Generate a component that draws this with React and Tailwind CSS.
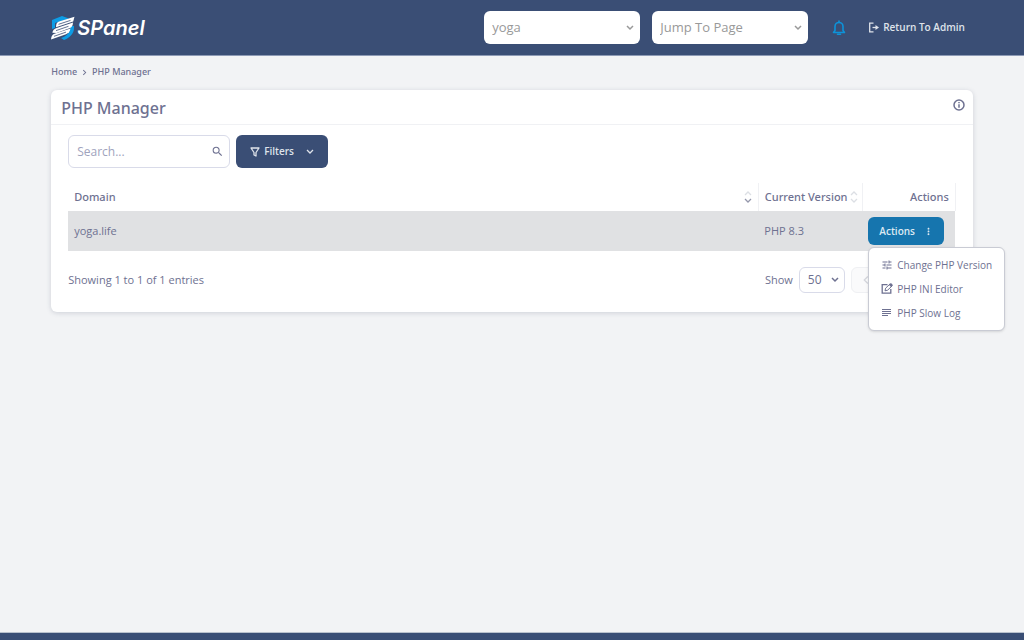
import { useState } from "react";
import {
  MdChevronLeft,
  MdChevronRight,
  MdMoreVert,
  MdSearch,
  MdTune,
} from "react-icons/md";

const headerSelectClassName =
  "h-[33px] w-full appearance-none rounded-md bg-white pr-7 pl-2 text-[13px] text-[#999] outline-none";

function Chevron({ className, strokeWidth = 1.5 }) {
  return (
    <svg viewBox="0 0 8 6" fill="none" stroke="currentColor" strokeWidth={strokeWidth} className={className} aria-hidden="true">
      <path d="M1 1l3 3 3-3" />
    </svg>
  );
}

function Logo() {
  return (
    <a href="#home" className="flex items-center gap-0.5 text-white">
      <svg viewBox="0 0 24 24" className="h-6 w-6" aria-hidden="true">
        <path d="M1 13V4l10-4 7 2.500L4 7v5z" fill="#0d9ce5" />
        <path d="M19.500 10H23v2c0 6-5 10-10 12l-3-2c6-2 9.500-6 9.500-12z" fill="#0d9ce5" />
        <path d="M23.500.8L8 5.500C6 6.200 5 7.800 5 11.200L22.200 5.500z" fill="#fff" />
        <path d="M22 6.500L5 12.300c-2 .8-3 1.700-3.700 4.500L5.500 17l13.500-5C21 11 21.800 9.500 22 6.500z" fill="#fff" />
        <path d="M19.500 12.500L3.500 17.800C1.200 18.700.3 20 0 23.500l15-5.300c2.500-1 4-2.500 4.500-5.700z" fill="#fff" />
        <path d="M7.500 8.300l12-3.900M5 14.600l12.500-4.300M3 20.300l12-4.200" stroke="#3a4e75" strokeWidth="0.800" />
      </svg>
      <span className="font-['Inter'] text-xl leading-6 font-semibold italic">SPanel</span>
    </a>
  );
}

function BellIcon() {
  return (
    <svg viewBox="0 0 14 16" fill="none" stroke="currentColor" strokeWidth="1.600" strokeLinejoin="round" className="h-4 w-3.5" aria-hidden="true">
      <path d="M1.500 12.500l1.500-2V6.500a4 4 0 0 1 8 0v4l1.500 2z" />
      <path d="M7 1v1.500M5.500 14.200h3" strokeLinecap="round" />
    </svg>
  );
}

function ExitIcon() {
  return (
    <svg viewBox="0 0 12 12" fill="none" stroke="currentColor" strokeWidth="1.300" className="h-3 w-3" aria-hidden="true">
      <path d="M5.500 1.200H1.700v8.600h3.800" />
      <path d="M4.500 5.500H9" />
      <path d="M7.500 3v5l3.500-2.500z" fill="currentColor" stroke="none" />
    </svg>
  );
}

function InfoIcon() {
  return (
    <svg viewBox="0 0 12 12" fill="none" stroke="currentColor" strokeWidth="1.500" className="h-3 w-3" aria-hidden="true">
      <circle cx="6" cy="6" r="5" />
      <path d="M6 5.200v3.600M6 3v1.300" />
    </svg>
  );
}

function FilterIcon() {
  return (
    <svg viewBox="0 0 10 10" fill="none" stroke="currentColor" strokeWidth="1.300" strokeLinejoin="round" className="h-2.5 w-2.5" aria-hidden="true">
      <path d="M1 1h8L6 5.500V9L4 8V5.500z" />
    </svg>
  );
}

function EditIcon() {
  return (
    <svg viewBox="0 0 12 12" fill="none" stroke="currentColor" strokeWidth="1.300" className="h-3 w-3" aria-hidden="true">
      <path d="M6.500 1.700H1.200v8.500h8.600V6" />
      <path d="M4 7.800l.6-2.600L9.300.7l2 2-4.700 4.500z" strokeWidth="1" />
      <path d="M8 2l1.600-1.600c.6-.5 2.500 1.300 1.900 1.900L10 3.900z" fill="currentColor" stroke="none" />
    </svg>
  );
}

function LogIcon() {
  return (
    <svg viewBox="0 0 12 12" stroke="currentColor" strokeWidth="1" className="h-3 w-3" aria-hidden="true">
      <path d="M1 2.500h9M1 4.500h9M1 6.500h9M1 8.500h6" />
    </svg>
  );
}

function SortIcon({ active }) {
  return (
    <svg viewBox="0 0 8 12" fill="none" strokeWidth="1.300" className="h-3 w-2" aria-hidden="true">
      <path d="M1 4l3-3 3 3" stroke="#dcdfe4" />
      <path d="M1 8l3 3 3-3" stroke={active ? "#9497ab" : "#dcdfe4"} />
    </svg>
  );
}

const menuItems = [
  { label: "Change PHP Version", icon: <MdTune size={12} /> },
  { label: "PHP INI Editor", icon: <EditIcon /> },
  { label: "PHP Slow Log", icon: <LogIcon /> },
];

function ActionsMenu() {
  const [open, setOpen] = useState(true);

  return (
    <div className="relative">
      <button
        type="button"
        aria-expanded={open}
        onClick={() => setOpen(!open)}
        className="flex h-7 items-center gap-2 rounded-md bg-[#1675ae] pr-2.5 pl-[11px] text-[10px] font-semibold text-[#dce9f2]"
      >
        Actions
        <MdMoreVert size={11} />
      </button>
      {open && (
        <ul className="absolute top-[30px] left-0 z-10 rounded-md border border-[#c9cbd4] bg-white py-[5px] shadow-sm">
          {menuItems.map((item) => (
            <li key={item.label}>
              <a href="#action" className="flex h-6 items-center gap-1 px-3 text-[10px] whitespace-nowrap">
                {item.icon}
                {item.label}
              </a>
            </li>
          ))}
        </ul>
      )}
    </div>
  );
}

export default function App() {
  const [search, setSearch] = useState("");

  return (
    <div className="flex min-h-screen flex-col bg-[#f2f3f5] font-['Open_Sans','Noto_Sans',sans-serif] text-[#6e7191]">
      <header className="flex h-14 items-center border-b border-[#8d9ab5] bg-[#3a4e75] px-[5%]">
        <Logo />
        <div className="ml-auto flex items-center gap-3">
          <div className="relative w-[156px]">
            <select aria-label="Account" className={headerSelectClassName}>
              <option>yoga</option>
            </select>
            <Chevron className="pointer-events-none absolute top-3.5 right-1.5 h-1.5 w-2 text-[#999]" />
          </div>
          <div className="relative w-[156px]">
            <select aria-label="Jump To Page" className={headerSelectClassName}>
              <option>Jump To Page</option>
            </select>
            <Chevron className="pointer-events-none absolute top-3.5 right-1.5 h-1.5 w-2 text-[#999]" />
          </div>
          <button type="button" aria-label="Notifications" className="ml-3 text-[#0d93d9]">
            <BellIcon />
          </button>
          <a href="#admin" className="ml-2.5 flex items-center gap-[3px] pr-2 text-[10px] font-semibold text-[#dfe3ea]">
            <ExitIcon />
            Return To Admin
          </a>
        </div>
      </header>

      <main className="flex-1 px-[5%]">
        <nav aria-label="Breadcrumb" className="flex h-[34px] items-center gap-0.5 pb-0.5 font-['Noto_Sans',sans-serif] text-[9px] font-medium">
          <a href="#home">Home</a>
          <MdChevronRight size={11} />
          <span>PHP Manager</span>
        </nav>

        <section className="rounded-md bg-white shadow-[0_1px_5px_rgba(60,70,100,0.2)]">
          <div className="flex h-[35px] items-center justify-between border-b border-[#f0f1f4] px-2">
            <h1 className="pt-0.5 pl-0.5 font-['Noto_Sans',sans-serif] text-base font-medium">PHP Manager</h1>
            <button type="button" aria-label="About PHP Manager" className="pb-1">
              <InfoIcon />
            </button>
          </div>

          <div className="px-[17px] pt-2.5 pb-[19px]">
            <div className="flex gap-1.5">
              <div className="relative w-[162px]">
                <input
                  type="search"
                  aria-label="Search"
                  value={search}
                  onChange={(event) => setSearch(event.target.value)}
                  placeholder="Search..."
                  className="h-[33px] w-full rounded-md border border-[#d9dbe9] pr-7 pl-2 text-xs outline-none placeholder:text-[#a0a3bd]"
                />
                <MdSearch size={13} className="absolute top-2.5 right-1.5" />
              </div>
              <button
                type="button"
                className="flex h-[33px] items-center gap-1 rounded-md bg-[#3a4e75] px-3.5 text-[10px] font-semibold text-[#dfe3ea]"
              >
                <FilterIcon />
                Filters
                <Chevron strokeWidth={1.3} className="ml-2 h-1.5 w-2" />
              </button>
            </div>

            <table className="mt-[15px] w-full text-left text-[11px]">
              <thead className="font-['Noto_Sans',sans-serif]">
                <tr className="h-7">
                  <th className="border-r border-[#f0f1f4] px-1.5 font-medium">
                    <span className="flex items-center justify-between">
                      Domain
                      <SortIcon active />
                    </span>
                  </th>
                  <th className="w-[104px] border-r border-[#f0f1f4] pr-1 pl-1.5 font-medium">
                    <span className="flex items-center justify-between whitespace-nowrap">
                      Current Version
                      <SortIcon />
                    </span>
                  </th>
                  <th className="w-[93px] border-r border-[#f0f1f4] px-1.5 text-right font-medium">Actions</th>
                </tr>
              </thead>
              <tbody>
                <tr className="h-10 bg-[#e0e1e3]">
                  <td className="px-1.5">yoga.life</td>
                  <td className="px-1.5">PHP 8.3</td>
                  <td className="px-1.5">
                    <ActionsMenu />
                  </td>
                </tr>
              </tbody>
            </table>

            <div className="mt-4 flex items-center justify-between text-[11px]">
              <p>Showing 1 to 1 of 1 entries</p>
              <div className="flex items-center gap-1.5">
                <label htmlFor="page-size">Show</label>
                <div className="relative">
                  <select
                    id="page-size"
                    className="h-[26px] w-[46px] appearance-none rounded-md border border-[#d9dbe9] bg-white pl-2 text-xs outline-none"
                  >
                    <option>50</option>
                  </select>
                  <Chevron className="pointer-events-none absolute top-2.5 right-1.5 h-1.5 w-2" />
                </div>
                <div className="flex w-[105px] justify-between rounded-md border border-[#eff0f3] bg-[#fafafb] text-[#d4d6dc]">
                  <button type="button" disabled aria-label="Previous page" className="h-6 px-1.5">
                    <MdChevronLeft size={16} />
                  </button>
                  <button type="button" disabled aria-label="Next page" className="h-6 px-1.5">
                    <MdChevronRight size={16} />
                  </button>
                </div>
              </div>
            </div>
          </div>
        </section>
      </main>

      <footer className="h-2 border-t border-[#b9c1cd] bg-[#3a4e75]" />
    </div>
  );
}
